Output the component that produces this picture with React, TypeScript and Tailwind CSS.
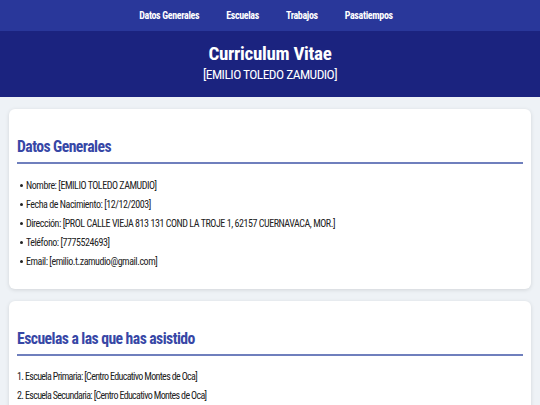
import type { ReactNode } from "react";

const datos = [
  "Nombre: [EMILIO TOLEDO ZAMUDIO]",
  "Fecha de Nacimiento: [12/12/2003]",
  "Dirección: [PROL CALLE VIEJA 813 131 COND LA TROJE 1, 62157 CUERNAVACA, MOR.]",
  "Teléfono: [7775524693]",
  "Email: [emilio.t.zamudio@gmail.com]",
];

const escuelas = [
  "Escuela Primaria: [Centro Educativo Montes de Oca]",
  "Escuela Secundaria: [Centro Educativo Montes de Oca]",
  "Preparatoria: [Centro Educativo Montes de Oca]",
];

function Section({ title, children }: { title: string; children: ReactNode }) {
  return (
    <section className="rounded-md bg-white px-2 pb-[18px] pt-[27px] shadow-[0_1px_4px_rgba(0,0,0,0.12)]">
      <h2 className="border-b-2 border-[#6f7fbd] pb-1 text-[15.7px] font-bold leading-[22px] tracking-[-0.55px] text-[#3747a6]">
        {title}
      </h2>
      {children}
    </section>
  );
}

export default function App() {
  return (
    <div className="min-h-screen bg-[#eef2f6] font-['Roboto',sans-serif] font-stretch-condensed text-[#222]">
      <nav className="flex h-[31px] items-center justify-center gap-[27px] bg-[#29379a] pr-[8px] text-[10px] font-bold tracking-[-0.35px] text-white">
        <a>Datos Generales</a>
        <a>Escuelas</a>
        <a>Trabajos</a>
        <a>Pasatiempos</a>
      </nav>
      <header className="flex h-[66px] flex-col items-center justify-center bg-[#1b237f] pb-[2px] text-white">
        <h1 className="text-[19px] font-bold leading-[23px] tracking-[-0.3px]">Curriculum Vitae</h1>
        <p className="text-[13.5px] leading-[19px] tracking-[-0.55px]">[EMILIO TOLEDO ZAMUDIO]</p>
      </header>
      <main className="flex flex-col gap-3 px-[9px] pt-3">
        <Section title="Datos Generales">
          <ul className="mt-[12px] flex flex-col text-[10px] leading-[19px] tracking-[-0.45px]">
            {datos.map((d) => (
              <li key={d} className="flex items-center gap-[3px] pl-[3px]">
                <span className="h-[3px] w-[3px] rounded-full bg-[#222]" />
                <span>{d}</span>
              </li>
            ))}
          </ul>
        </Section>
        <Section title="Escuelas a las que has asistido">
          <ol className="mt-[12px] flex flex-col text-[10px] leading-[18.5px] tracking-[-0.65px]">
            {escuelas.map((d, i) => (
              <li key={d}>
                {i + 1}. {d}
              </li>
            ))}
          </ol>
        </Section>
      </main>
    </div>
  );
}
